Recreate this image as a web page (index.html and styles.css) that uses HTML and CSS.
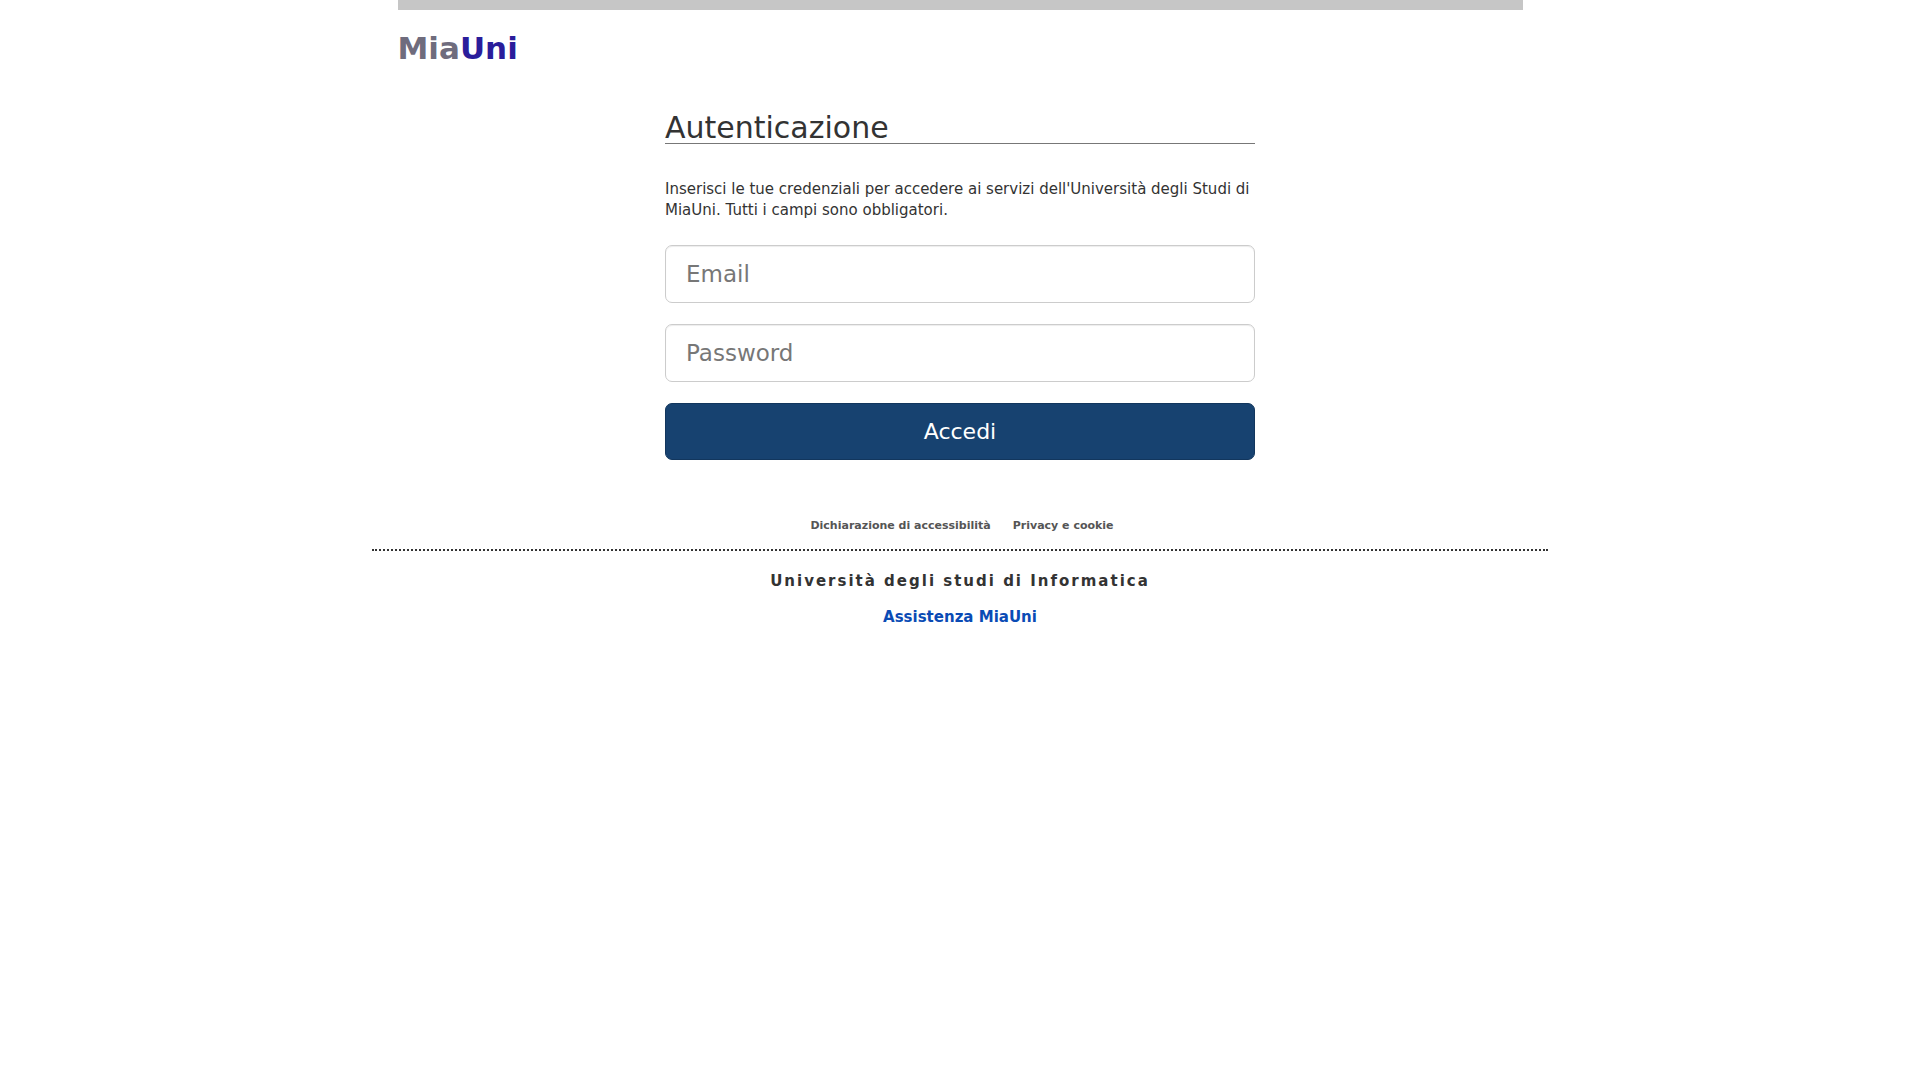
FILE: index.html
```html
<!DOCTYPE html>
<html lang="it">
<head>
<meta charset="utf-8">
<title>MiaUni</title>
<link rel="stylesheet" href="styles.css">
</head>
<body>
<header class="header">
  <p class="brand">Mia<span class="brand-accent">Uni</span></p>
</header>
<main class="login">
  <h1 class="title">Autenticazione</h1>
  <p class="intro">Inserisci le tue credenziali per accedere ai servizi dell'Università degli Studi di MiaUni. Tutti i campi sono obbligatori.</p>
  <form class="form">
    <input class="field" type="email" placeholder="Email" aria-label="Email" required>
    <input class="field" type="password" placeholder="Password" aria-label="Password" required>
    <button class="submit" type="submit">Accedi</button>
  </form>
</main>
<footer class="footer">
  <nav class="links">
    <a class="link" href="#">Dichiarazione di accessibilità</a>
    <a class="link" href="#">Privacy e cookie</a>
  </nav>
  <p class="university">Università degli studi di Informatica</p>
  <a class="support" href="#">Assistenza MiaUni</a>
</footer>
</body>
</html>
```
FILE: styles.css
```css
* { box-sizing: border-box; }
body {
  margin: 0;
  background: #fff;
  color: #333;
  font-family: Verdana, "DejaVu Sans", sans-serif;
  font-size: 15px;
  line-height: 21px;
}
p, h1 { margin: 0; }
.header {
  max-width: 1125px;
  margin: 0 auto;
  padding-top: 18px;
  border-top: 10px solid #c6c6c6;
}
.brand { color: #6f6c7d; font-size: 31px; font-weight: bold; line-height: 40px; }
.brand-accent { color: #2a1d9b; }
.login { max-width: 590px; margin: 0 auto; padding-top: 44px; }
.title {
  border-bottom: 1px solid #777;
  font-size: 30px;
  font-weight: normal;
  line-height: 31px;
}
.intro { margin-top: 35px; }
.form { display: grid; gap: 21px; margin-top: 24px; }
.field, .submit {
  width: 100%;
  height: 58px;
  padding: 0 20px;
  border: 1px solid #ccc;
  border-radius: 7px;
  font: inherit;
  font-size: 23px;
}
.field { box-shadow: inset 0 1px 1px rgba(0, 0, 0, 0.075); }
.field::placeholder { color: #777; }
.submit {
  height: 57px;
  border-color: #12365d;
  background: #174270;
  color: #fff;
  font-size: 22px;
}
.footer { max-width: 1176px; margin: 55px auto 0; text-align: center; }
.links {
  display: flex;
  justify-content: center;
  gap: 22px;
  padding: 0 0 13px 4px;
  border-bottom: 2px dotted #333;
}
.link { color: #555; font-size: 11px; font-weight: bold; text-decoration: none; }
.university { margin: 20px 0 15px; font-weight: bold; letter-spacing: 2px; }
.support { color: #0a4bb5; font-weight: bold; text-decoration: none; }
```
